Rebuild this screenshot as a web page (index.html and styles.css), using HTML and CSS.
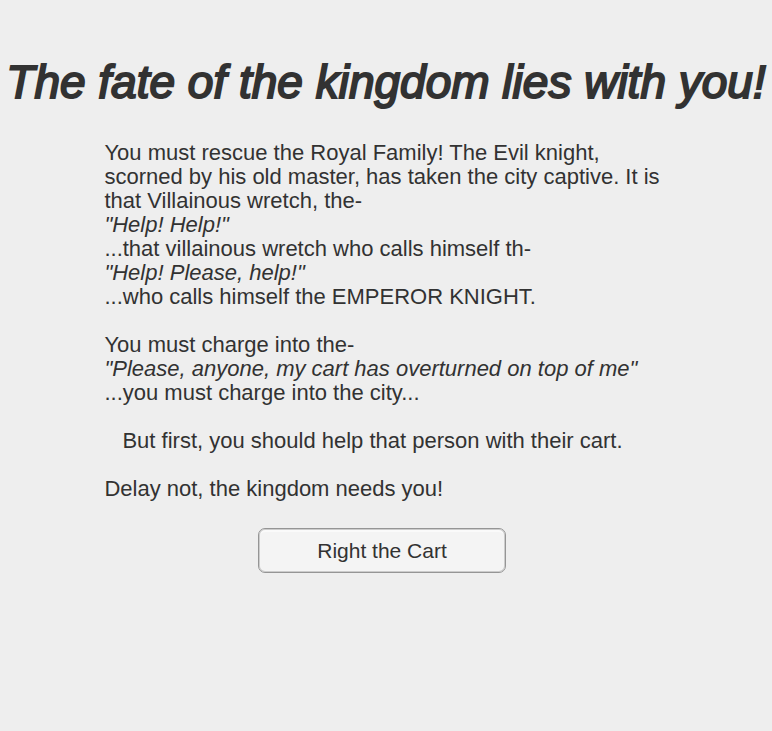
FILE: index.html
```html
<!DOCTYPE html>
<html lang="en">
<head>
<meta charset="utf-8">
<title>The fate of the kingdom</title>
<link rel="stylesheet" href="styles.css">
</head>
<body>
<main class="scene">
<h1 class="title">The fate of the kingdom lies with you!</h1>
<div class="content">
<div class="story">
<p>You must rescue the Royal Family! The Evil knight,<br>scorned by his old master, has taken the city captive. It is<br>that Villainous wretch, the-<br><em>"Help! Help!"</em><br>...that villainous wretch who calls himself th-<br><em>"Help! Please, help!"</em><br>...who calls himself the EMPEROR KNIGHT.</p>
<p>You must charge into the-<br><em>"Please, anyone, my cart has overturned on top of me"</em><br>...you must charge into the city...</p>
<p class="aside">But first, you should help that person with their cart.</p>
<p>Delay not, the kingdom needs you!</p>
</div>
<button class="action" type="button">Right the Cart</button>
</div>
</main>
</body>
</html>
```
FILE: styles.css
```css
body {
  margin: 0;
  background: #eeeeee;
  color: #323232;
  font-family: "Liberation Sans", Arial, sans-serif;
}

.scene {
  display: flex;
  flex-direction: column;
  align-items: center;
  padding-top: 54px;
}

.title {
  margin: 0 0 31px;
  font-size: 46px;
  line-height: 56px;
  font-style: italic;
  font-weight: 400;
  -webkit-text-stroke: 2px #323232;
  text-align: center;
  white-space: nowrap;
}

.content {
  display: flex;
  flex-direction: column;
  align-items: center;
  margin-right: 8px;
}

.story {
  font-size: 22px;
  line-height: 24px;
  white-space: nowrap;
}

.story p {
  margin: 0 0 24px;
}

.story .aside {
  padding-left: 18px;
}

.action {
  box-sizing: border-box;
  width: 248px;
  height: 45px;
  margin-top: 3px;
  border: 1px solid #959595;
  border-radius: 7px;
  background: #f4f4f4;
  box-shadow: inset 0 0 0 1px #cccccc, inset 0 3px #fafafa;
  color: #323232;
  font: 21px "Liberation Sans", Arial, sans-serif;
}
```
